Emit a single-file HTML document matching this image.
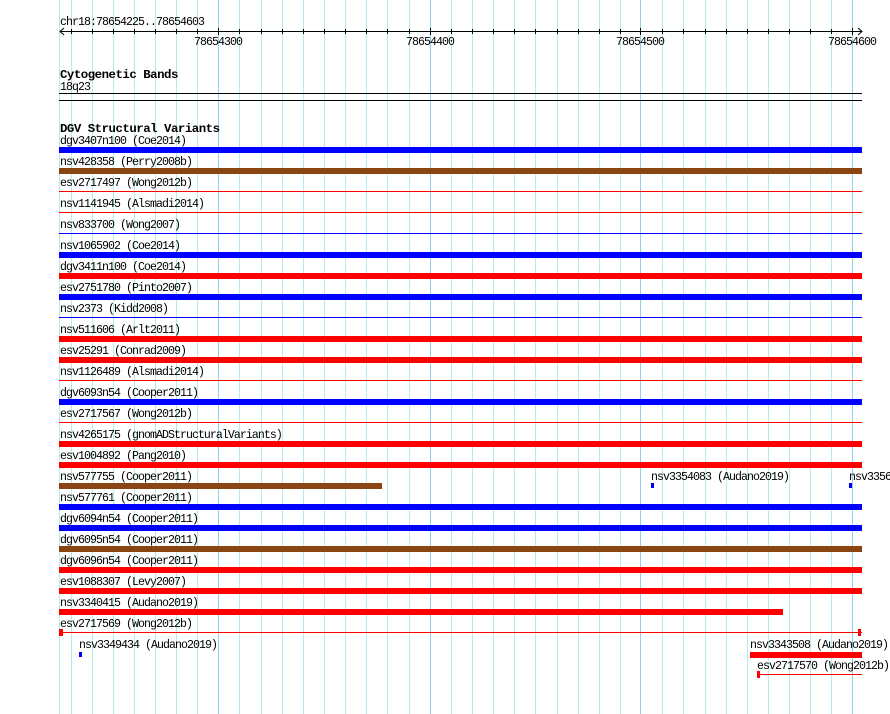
<!DOCTYPE html>
<html><head><style>html,body{margin:0;padding:0;background:#fff}svg{display:block}
text{font-family:"Liberation Mono",monospace;font-size:11.6px;letter-spacing:-0.96px;fill:#000}
.b{font-weight:bold;font-size:12.4px;letter-spacing:-0.5px}</style></head><body>
<svg width="890" height="714" xmlns="http://www.w3.org/2000/svg">
<g fill="#b4eaf2">
<rect x="59" y="0" width="1" height="714"/><rect x="71" y="0" width="1" height="714"/><rect x="92" y="0" width="1" height="714"/><rect x="113" y="0" width="1" height="714"/><rect x="134" y="0" width="1" height="714"/><rect x="155" y="0" width="1" height="714"/><rect x="176" y="0" width="1" height="714"/><rect x="197" y="0" width="1" height="714"/><rect x="239" y="0" width="1" height="714"/><rect x="261" y="0" width="1" height="714"/><rect x="282" y="0" width="1" height="714"/><rect x="303" y="0" width="1" height="714"/><rect x="324" y="0" width="1" height="714"/><rect x="345" y="0" width="1" height="714"/><rect x="366" y="0" width="1" height="714"/><rect x="387" y="0" width="1" height="714"/><rect x="409" y="0" width="1" height="714"/><rect x="451" y="0" width="1" height="714"/><rect x="472" y="0" width="1" height="714"/><rect x="493" y="0" width="1" height="714"/><rect x="514" y="0" width="1" height="714"/><rect x="535" y="0" width="1" height="714"/><rect x="557" y="0" width="1" height="714"/><rect x="578" y="0" width="1" height="714"/><rect x="599" y="0" width="1" height="714"/><rect x="620" y="0" width="1" height="714"/><rect x="662" y="0" width="1" height="714"/><rect x="683" y="0" width="1" height="714"/><rect x="705" y="0" width="1" height="714"/><rect x="726" y="0" width="1" height="714"/><rect x="747" y="0" width="1" height="714"/><rect x="768" y="0" width="1" height="714"/><rect x="789" y="0" width="1" height="714"/><rect x="810" y="0" width="1" height="714"/><rect x="831" y="0" width="1" height="714"/>
</g>
<g fill="#8cd0ec">
<rect x="218" y="0" width="1" height="714"/><rect x="430" y="0" width="1" height="714"/><rect x="640" y="0" width="1" height="714"/><rect x="852" y="0" width="1" height="714"/>
</g>
<text x="60" y="25">chr18:78654225..78654603</text>
<rect x="60" y="31" width="802" height="1" fill="#000"/>
<path d="M64 28 L60 31.5 L64 35 M858 28 L862 31.5 L858 35" stroke="#000" fill="none"/>
<g fill="#000">
<rect x="71" y="29" width="1" height="5"/><rect x="92" y="29" width="1" height="5"/><rect x="113" y="29" width="1" height="5"/><rect x="134" y="29" width="1" height="5"/><rect x="155" y="29" width="1" height="5"/><rect x="176" y="29" width="1" height="5"/><rect x="197" y="29" width="1" height="5"/><rect x="218" y="28" width="1" height="7"/><rect x="239" y="29" width="1" height="5"/><rect x="261" y="29" width="1" height="5"/><rect x="282" y="29" width="1" height="5"/><rect x="303" y="29" width="1" height="5"/><rect x="324" y="29" width="1" height="5"/><rect x="345" y="29" width="1" height="5"/><rect x="366" y="29" width="1" height="5"/><rect x="387" y="29" width="1" height="5"/><rect x="409" y="29" width="1" height="5"/><rect x="430" y="28" width="1" height="7"/><rect x="451" y="29" width="1" height="5"/><rect x="472" y="29" width="1" height="5"/><rect x="493" y="29" width="1" height="5"/><rect x="514" y="29" width="1" height="5"/><rect x="535" y="29" width="1" height="5"/><rect x="557" y="29" width="1" height="5"/><rect x="578" y="29" width="1" height="5"/><rect x="599" y="29" width="1" height="5"/><rect x="620" y="29" width="1" height="5"/><rect x="640" y="28" width="1" height="7"/><rect x="662" y="29" width="1" height="5"/><rect x="683" y="29" width="1" height="5"/><rect x="705" y="29" width="1" height="5"/><rect x="726" y="29" width="1" height="5"/><rect x="747" y="29" width="1" height="5"/><rect x="768" y="29" width="1" height="5"/><rect x="789" y="29" width="1" height="5"/><rect x="810" y="29" width="1" height="5"/><rect x="831" y="29" width="1" height="5"/><rect x="852" y="28" width="1" height="7"/>
</g>
<text x="194" y="45">78654300</text><text x="406" y="45">78654400</text><text x="616" y="45">78654500</text><text x="828" y="45">78654600</text>
<text class="b" x="60" y="78">Cytogenetic Bands</text>
<text x="60" y="90">18q23</text>
<rect x="59" y="93" width="803" height="1" fill="#000"/>
<rect x="59" y="100" width="803" height="1" fill="#000"/>
<text class="b" x="60" y="132">DGV Structural Variants</text>
<g>
<text x="60" y="144">dgv3407n100 (Coe2014)</text><rect x="59" y="147" width="803" height="6" fill="#0000ff"/>
<text x="60" y="165">nsv428358 (Perry2008b)</text><rect x="59" y="168" width="803" height="6" fill="#8b4513"/>
<text x="60" y="186">esv2717497 (Wong2012b)</text><rect x="59" y="191" width="803" height="1" fill="#ff0000"/>
<text x="60" y="207">nsv1141945 (Alsmadi2014)</text><rect x="59" y="212" width="803" height="1" fill="#ff0000"/>
<text x="60" y="228">nsv833700 (Wong2007)</text><rect x="59" y="233" width="803" height="1" fill="#0000ff"/>
<text x="60" y="249">nsv1065902 (Coe2014)</text><rect x="59" y="252" width="803" height="6" fill="#0000ff"/>
<text x="60" y="270">dgv3411n100 (Coe2014)</text><rect x="59" y="273" width="803" height="6" fill="#ff0000"/>
<text x="60" y="291">esv2751780 (Pinto2007)</text><rect x="59" y="294" width="803" height="6" fill="#0000ff"/>
<text x="60" y="312">nsv2373 (Kidd2008)</text><rect x="59" y="317" width="803" height="1" fill="#0000ff"/>
<text x="60" y="333">nsv511606 (Arlt2011)</text><rect x="59" y="336" width="803" height="6" fill="#ff0000"/>
<text x="60" y="354">esv25291 (Conrad2009)</text><rect x="59" y="357" width="803" height="6" fill="#ff0000"/>
<text x="60" y="375">nsv1126489 (Alsmadi2014)</text><rect x="59" y="380" width="803" height="1" fill="#ff0000"/>
<text x="60" y="396">dgv6093n54 (Cooper2011)</text><rect x="59" y="399" width="803" height="6" fill="#0000ff"/>
<text x="60" y="417">esv2717567 (Wong2012b)</text><rect x="59" y="422" width="803" height="1" fill="#ff0000"/>
<text x="60" y="438">nsv4265175 (gnomADStructuralVariants)</text><rect x="59" y="441" width="803" height="6" fill="#ff0000"/>
<text x="60" y="459">esv1004892 (Pang2010)</text><rect x="59" y="462" width="803" height="6" fill="#ff0000"/>
<text x="60" y="480">nsv577755 (Cooper2011)</text><rect x="59" y="483" width="323" height="6" fill="#8b4513"/>
<text x="651" y="480">nsv3354083 (Audano2019)</text><rect x="651" y="483" width="3" height="5" fill="#0000ff"/>
<text x="849" y="480">nsv3356</text><rect x="849" y="483" width="3" height="5" fill="#0000ff"/>
<text x="60" y="501">nsv577761 (Cooper2011)</text><rect x="59" y="504" width="803" height="6" fill="#0000ff"/>
<text x="60" y="522">dgv6094n54 (Cooper2011)</text><rect x="59" y="525" width="803" height="6" fill="#0000ff"/>
<text x="60" y="543">dgv6095n54 (Cooper2011)</text><rect x="59" y="546" width="803" height="6" fill="#8b4513"/>
<text x="60" y="564">dgv6096n54 (Cooper2011)</text><rect x="59" y="567" width="803" height="6" fill="#ff0000"/>
<text x="60" y="585">esv1088307 (Levy2007)</text><rect x="59" y="588" width="803" height="6" fill="#ff0000"/>
<text x="60" y="606">nsv3340415 (Audano2019)</text><rect x="59" y="609" width="724" height="6" fill="#ff0000"/>
<text x="60" y="627">esv2717569 (Wong2012b)</text><rect x="59" y="632" width="803" height="1" fill="#ff0000"/>
<rect x="59" y="629" width="4" height="7" fill="#ff0000"/><rect x="858" y="629" width="3" height="7" fill="#ff0000"/>
<text x="79" y="648">nsv3349434 (Audano2019)</text><rect x="79" y="652" width="3" height="5" fill="#0000ff"/>
<text x="750" y="648">nsv3343508 (Audano2019)</text><rect x="750" y="652" width="112" height="6" fill="#ff0000"/>
<text x="757" y="669">esv2717570 (Wong2012b)</text><rect x="757" y="674" width="105" height="1" fill="#ff0000"/><rect x="757" y="671" width="3" height="7" fill="#ff0000"/>
</g>
</svg>
</body></html>
